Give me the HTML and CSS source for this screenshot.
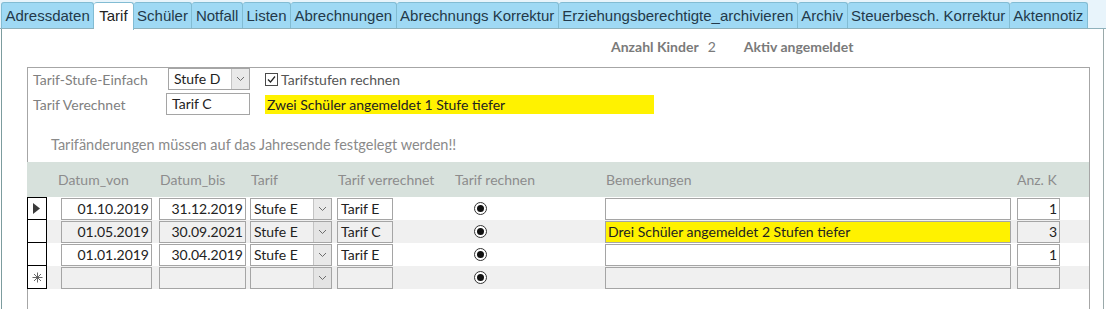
FILE: index.html
```html
<!DOCTYPE html>
<html lang="de">
<head>
    <meta charset="UTF-8">
    <title>Tarif</title>
    <link rel="stylesheet" href="styles.css">
</head>
<body>
    <div class="tabs">
        <div class="tab">Adressdaten</div>
        <div class="tab active">Tarif</div>
        <div class="tab">Schüler</div>
        <div class="tab">Notfall</div>
        <div class="tab">Listen</div>
        <div class="tab">Abrechnungen</div>
        <div class="tab">Abrechnungs Korrektur</div>
        <div class="tab">Erziehungsberechtigte_archivieren</div>
        <div class="tab">Archiv</div>
        <div class="tab">Steuerbesch. Korrektur</div>
        <div class="tab">Aktennotiz</div>
    </div>

    <div class="page">
        <div class="info">
            <span class="info-label">Anzahl Kinder</span>
            <span class="info-value">2</span>
            <span class="info-label">Aktiv angemeldet</span>
        </div>

        <div class="form-box">
            <div class="field-row">
                <span class="field-label">Tarif-Stufe-Einfach</span>
                <div class="combo combo-main">
                    <span class="combo-text">Stufe D</span>
                    <span class="combo-btn"><svg width="9" height="6" viewBox="0 0 9 6"><polyline points="1,1 4.5,4.5 8,1" fill="none" stroke="#6d6d6d" stroke-width="1"/></svg></span>
                </div>
                <div class="check">
                    <span class="checkbox"><svg width="11" height="11" viewBox="0 0 11 11"><polyline points="2,5.5 4.5,8 9,2.5" fill="none" stroke="#222" stroke-width="1.2"/></svg></span>
                    Tarifstufen rechnen
                </div>
            </div>
            <div class="field-row second">
                <span class="field-label">Tarif Verechnet</span>
                <div class="textbox">Tarif C</div>
                <div class="highlight">Zwei Schüler angemeldet 1 Stufe tiefer</div>
            </div>

            <p class="note">Tarifänderungen müssen auf das Jahresende festgelegt werden!!</p>

            <div class="sheet">
                <div class="sheet-head">
                    <div class="cell sel-blank"></div>
                    <div class="cell c-von">Datum_von</div>
                    <div class="cell c-bis">Datum_bis</div>
                    <div class="cell c-tarif">Tarif</div>
                    <div class="cell c-verr">Tarif verrechnet</div>
                    <div class="cell c-rech">Tarif rechnen</div>
                    <div class="cell c-bem">Bemerkungen</div>
                    <div class="cell c-anz">Anz. K</div>
                </div>

                <div class="row first">
                    <div class="selector"><svg width="7" height="11" viewBox="0 0 7 11"><polygon points="0,0 7,5.5 0,11" fill="#3a3a3a"/></svg></div>
                    <div class="cell c-von box num">01.10.2019</div>
                    <div class="cell c-bis box num">31.12.2019</div>
                    <div class="cell c-tarif box combo"><span class="combo-text">Stufe E</span><span class="combo-btn"><svg width="9" height="6" viewBox="0 0 9 6"><polyline points="1,1 4.5,4.5 8,1" fill="none" stroke="#6d6d6d" stroke-width="1"/></svg></span></div>
                    <div class="cell c-verr box">Tarif E</div>
                    <div class="cell c-rech"><span class="radio"></span></div>
                    <div class="cell c-bem box"></div>
                    <div class="cell c-anz box num">1</div>
                </div>
                <div class="row alt">
                    <div class="selector"></div>
                    <div class="cell c-von box num">01.05.2019</div>
                    <div class="cell c-bis box num">30.09.2021</div>
                    <div class="cell c-tarif box combo"><span class="combo-text">Stufe E</span><span class="combo-btn"><svg width="9" height="6" viewBox="0 0 9 6"><polyline points="1,1 4.5,4.5 8,1" fill="none" stroke="#6d6d6d" stroke-width="1"/></svg></span></div>
                    <div class="cell c-verr box">Tarif C</div>
                    <div class="cell c-rech"><span class="radio"></span></div>
                    <div class="cell c-bem box yellow">Drei Schüler angemeldet 2 Stufen tiefer</div>
                    <div class="cell c-anz box num">3</div>
                </div>
                <div class="row">
                    <div class="selector"></div>
                    <div class="cell c-von box num">01.01.2019</div>
                    <div class="cell c-bis box num">30.04.2019</div>
                    <div class="cell c-tarif box combo"><span class="combo-text">Stufe E</span><span class="combo-btn"><svg width="9" height="6" viewBox="0 0 9 6"><polyline points="1,1 4.5,4.5 8,1" fill="none" stroke="#6d6d6d" stroke-width="1"/></svg></span></div>
                    <div class="cell c-verr box">Tarif E</div>
                    <div class="cell c-rech"><span class="radio"></span></div>
                    <div class="cell c-bem box"></div>
                    <div class="cell c-anz box num">1</div>
                </div>
                <div class="row alt">
                    <div class="selector"><svg width="11" height="11" viewBox="0 0 11 11"><g stroke="#555" stroke-width="0.9"><line x1="5.5" y1="0.5" x2="5.5" y2="10.5"/><line x1="0.5" y1="5.5" x2="10.5" y2="5.5"/><line x1="2" y1="2" x2="9" y2="9"/><line x1="9" y1="2" x2="2" y2="9"/></g></svg></div>
                    <div class="cell c-von box"></div>
                    <div class="cell c-bis box"></div>
                    <div class="cell c-tarif box combo"><span class="combo-text"></span><span class="combo-btn"><svg width="9" height="6" viewBox="0 0 9 6"><polyline points="1,1 4.5,4.5 8,1" fill="none" stroke="#6d6d6d" stroke-width="1"/></svg></span></div>
                    <div class="cell c-verr box"></div>
                    <div class="cell c-rech"><span class="radio"></span></div>
                    <div class="cell c-bem box"></div>
                    <div class="cell c-anz box"></div>
                </div>
            </div>
        </div>
    </div>
</body>
</html>
```

FILE: styles.css
```css
body {
    margin: 0;
    padding: 0;
    background-color: #fff;
    font-family: Lato, "Open Sans", sans-serif;
    font-size: 14px;
    color: #222;
}

/* Onglets */
.tabs {
    display: flex;
    height: 28px;
    padding-left: 1px;
    background-color: #e8f4fb;
    border-bottom: 1px solid #8fb1bb;
}
.tab {
    margin-top: 2px;
    padding: 0 3.5px;
    font-family: "Liberation Sans", Arial, sans-serif;
    font-size: 15px;
    line-height: 25px;
    white-space: nowrap;
    color: #23394a;
    background-color: #9fd9f4;
    border: 1px solid #82bcd3;
    border-bottom: none;
    border-left: none;
    border-radius: 3px 3px 0 0;
}
.tab:first-child {
    border-left: 1px solid #82bcd3;
}
.tab.active {
    padding: 0 5px;
    background-color: #fff;
    color: #222;
    height: 27px;
    margin-bottom: -1px;
}

.page {
    width: 1103px;
    box-sizing: border-box;
    height: 280px;
    overflow: hidden;
    margin-left: 1px;
    padding: 8px 0 0 25px;
    border-left: 1px solid #7c9c9e;
    border-right: 1px solid #9aa9aa;
}

.info {
    display: flex;
    height: 20px;
    line-height: 20px;
    padding-left: 584px;
    color: #7a7a7a;
}
.info-label {
    font-weight: bold;
}
.info-value {
    margin: 0 28px 0 9px;
}

.form-box {
    width: 1063px;
    box-sizing: border-box;
    height: 242px;
    margin-top: 10px;
    border: 1px solid #a6a6a6;
    border-bottom: none;
}

.field-row {
    display: flex;
    align-items: center;
    height: 22px;
    padding-left: 5px;
}
.field-row.second {
    margin-top: 3px;
}
.field-label {
    width: 135px;
    color: #808080;
}
.field-row.second .field-label {
    width: 133px;
}

.combo {
    display: flex;
    box-sizing: border-box;
    border: 1px solid #a5a5a5;
    background-color: #fff;
}
.combo-main {
    width: 82px;
    height: 22px;
}
.combo-text {
    flex: 1;
    padding-left: 5px;
    line-height: 20px;
}
.combo-btn {
    width: 17px;
    display: flex;
    align-items: center;
    justify-content: center;
    background-color: #e9e9e9;
    border-left: 1px solid #c4c4c4;
}

.check {
    display: flex;
    align-items: center;
    margin-left: 15px;
    color: #555;
}
.checkbox {
    width: 11px;
    height: 11px;
    margin-right: 3px;
    border: 1px solid #4a4a4a;
    background-color: #fff;
    display: flex;
}

.textbox {
    width: 84px;
    height: 22px;
    box-sizing: border-box;
    padding-left: 5px;
    line-height: 20px;
    border: 1px solid #a5a5a5;
}
.highlight {
    width: 389px;
    height: 19px;
    margin-left: 15px;
    padding-left: 2px;
    box-sizing: border-box;
    line-height: 19px;
    background-color: #fff200;
}

.note {
    margin: 20px 0 0 23px;
    font-size: 14.5px;
    line-height: 20px;
    color: #8a8a8a;
}

/* Feuille de données */
.sheet {
    margin: 7px 0 0 -1px;
}
.sheet-head {
    display: flex;
    height: 35px;
    align-items: center;
    background-color: #d7e1dc;
    color: #8c8c8c;
    white-space: nowrap;
}
.row {
    display: flex;
    height: 23px;
}
.row.alt {
    background-color: #f0f0f0;
}
.cell {
    flex: none;
    box-sizing: border-box;
}
.sel-blank {
    width: 20px;
}
.selector {
    width: 20px;
    height: 23px;
    box-sizing: border-box;
    border: 1px solid #000;
    border-top: none;
    background-color: #fff;
    display: flex;
    align-items: center;
    justify-content: center;
}
.row.first .selector {
    border-top: 1px solid #000;
}
.row.first .selector svg {
    margin-right: 2px;
}

.c-von { width: 91px; margin-left: 14px; }
.c-bis { width: 87px; margin-left: 7px; }
.c-tarif { width: 82px; margin-left: 4px; }
.c-verr { width: 56px; margin-left: 5px; }
.c-rech { width: 212px; }
.c-bem { width: 406px; }
.c-anz { width: 43px; margin-left: 6px; }

.sheet-head .c-von { text-indent: -3px; }
.sheet-head .c-bis,
.sheet-head .c-tarif,
.sheet-head .c-verr,
.sheet-head .c-bem { padding-left: 1px; }
.sheet-head .c-rech { padding-left: 62px; }

.box {
    height: 22px;
    margin-top: 1px;
    padding: 0 3px;
    line-height: 20px;
    border: 1px solid #a5a5a5;
    background-color: #fff;
}
.row.alt .box {
    background-color: #f0f0f0;
}
.box.num {
    text-align: right;
    padding-right: 2px;
}
.box.combo {
    padding: 0;
}
.box.combo .combo-text {
    padding-left: 3px;
}
.row.alt .combo-btn {
    background-color: #e4e4e4;
}
.box.yellow,
.row.alt .box.yellow {
    background-color: #fff200;
    padding-left: 2px;
}

.c-rech {
    display: flex;
    align-items: center;
    padding-left: 81px;
}
.radio {
    width: 13px;
    height: 13px;
    box-sizing: border-box;
    border: 1px solid #333;
    border-radius: 50%;
    display: flex;
    align-items: center;
    justify-content: center;
    background-color: #fff;
}
.radio::after {
    content: "";
    width: 7px;
    height: 7px;
    border-radius: 50%;
    background-color: #111;
}
```
